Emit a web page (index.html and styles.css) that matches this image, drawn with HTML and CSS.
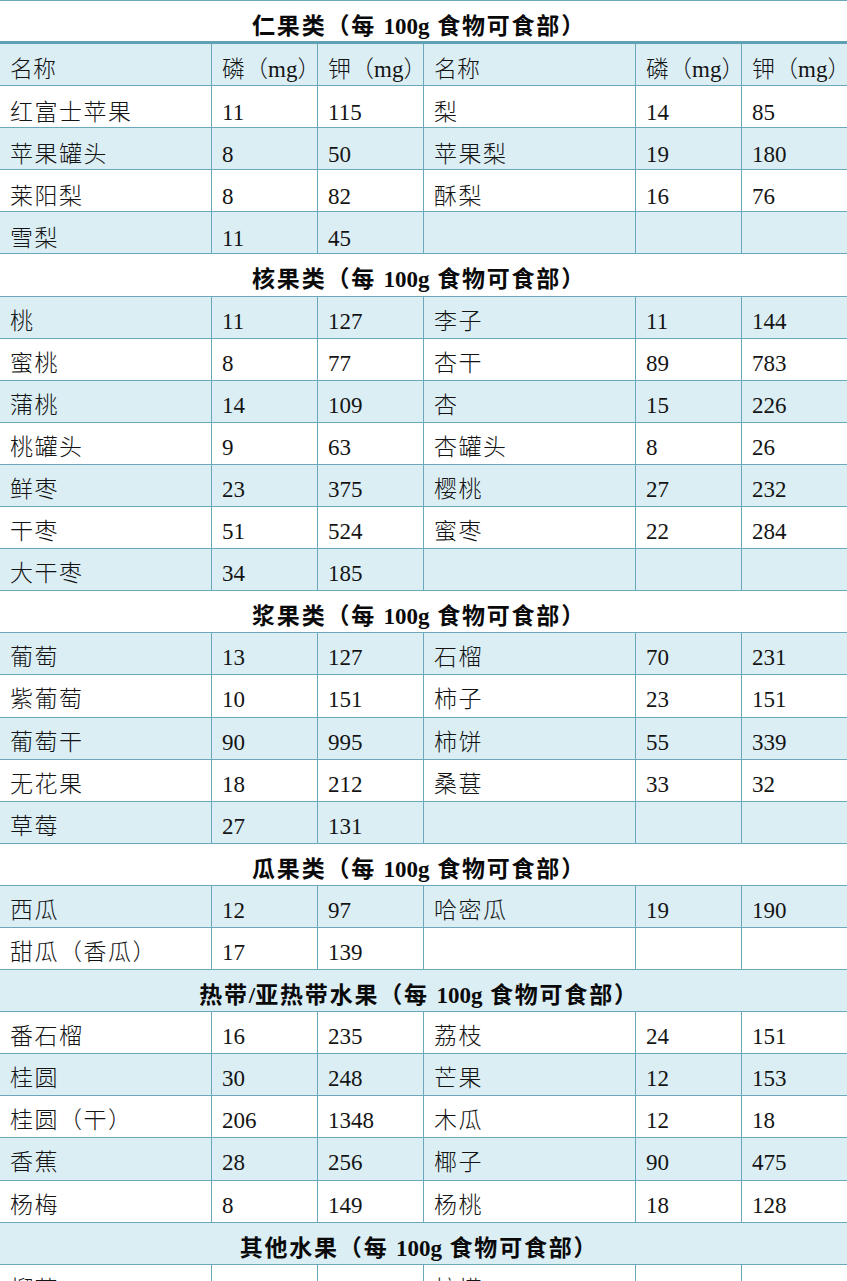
FILE: index.html
```html
<!DOCTYPE html>
<html lang="zh-CN">
<head>
<meta charset="utf-8">
<title>水果磷钾含量表</title>
<link rel="stylesheet" href="styles.css">
</head>
<body>
<div class="table">
  <div class="row title first"><div class="cell">仁果类（每 <span class="num">100g</span> 食物可食部）</div></div>
  <div class="row head alt"><div class="cell">名称</div><div class="cell">磷（mg<span class="hw">）</span></div><div class="cell">钾（mg<span class="hw">）</span></div><div class="cell">名称</div><div class="cell">磷（mg<span class="hw">）</span></div><div class="cell">钾（mg<span class="hw">）</span></div></div>
  <div class="row top"><div class="cell">红富士苹果</div><div class="cell">11</div><div class="cell">115</div><div class="cell">梨</div><div class="cell">14</div><div class="cell">85</div></div>
  <div class="row top alt"><div class="cell">苹果罐头</div><div class="cell">8</div><div class="cell">50</div><div class="cell">苹果梨</div><div class="cell">19</div><div class="cell">180</div></div>
  <div class="row top"><div class="cell">莱阳梨</div><div class="cell">8</div><div class="cell">82</div><div class="cell">酥梨</div><div class="cell">16</div><div class="cell">76</div></div>
  <div class="row top alt"><div class="cell">雪梨</div><div class="cell">11</div><div class="cell">45</div><div class="cell"></div><div class="cell"></div><div class="cell"></div></div>

  <div class="row title"><div class="cell">核果类（每 <span class="num">100g</span> 食物可食部）</div></div>
  <div class="row alt"><div class="cell">桃</div><div class="cell">11</div><div class="cell">127</div><div class="cell">李子</div><div class="cell">11</div><div class="cell">144</div></div>
  <div class="row"><div class="cell">蜜桃</div><div class="cell">8</div><div class="cell">77</div><div class="cell">杏干</div><div class="cell">89</div><div class="cell">783</div></div>
  <div class="row alt"><div class="cell">蒲桃</div><div class="cell">14</div><div class="cell">109</div><div class="cell">杏</div><div class="cell">15</div><div class="cell">226</div></div>
  <div class="row"><div class="cell">桃罐头</div><div class="cell">9</div><div class="cell">63</div><div class="cell">杏罐头</div><div class="cell">8</div><div class="cell">26</div></div>
  <div class="row alt"><div class="cell">鲜枣</div><div class="cell">23</div><div class="cell">375</div><div class="cell">樱桃</div><div class="cell">27</div><div class="cell">232</div></div>
  <div class="row"><div class="cell">干枣</div><div class="cell">51</div><div class="cell">524</div><div class="cell">蜜枣</div><div class="cell">22</div><div class="cell">284</div></div>
  <div class="row alt"><div class="cell">大干枣</div><div class="cell">34</div><div class="cell">185</div><div class="cell"></div><div class="cell"></div><div class="cell"></div></div>

  <div class="row title"><div class="cell">浆果类（每 <span class="num">100g</span> 食物可食部）</div></div>
  <div class="row alt"><div class="cell">葡萄</div><div class="cell">13</div><div class="cell">127</div><div class="cell">石榴</div><div class="cell">70</div><div class="cell">231</div></div>
  <div class="row"><div class="cell">紫葡萄</div><div class="cell">10</div><div class="cell">151</div><div class="cell">柿子</div><div class="cell">23</div><div class="cell">151</div></div>
  <div class="row alt"><div class="cell">葡萄干</div><div class="cell">90</div><div class="cell">995</div><div class="cell">柿饼</div><div class="cell">55</div><div class="cell">339</div></div>
  <div class="row"><div class="cell">无花果</div><div class="cell">18</div><div class="cell">212</div><div class="cell">桑葚</div><div class="cell">33</div><div class="cell">32</div></div>
  <div class="row alt"><div class="cell">草莓</div><div class="cell">27</div><div class="cell">131</div><div class="cell"></div><div class="cell"></div><div class="cell"></div></div>

  <div class="row title"><div class="cell">瓜果类（每 <span class="num">100g</span> 食物可食部）</div></div>
  <div class="row alt"><div class="cell">西瓜</div><div class="cell">12</div><div class="cell">97</div><div class="cell">哈密瓜</div><div class="cell">19</div><div class="cell">190</div></div>
  <div class="row"><div class="cell">甜瓜（香瓜）</div><div class="cell">17</div><div class="cell">139</div><div class="cell"></div><div class="cell"></div><div class="cell"></div></div>

  <div class="row title alt"><div class="cell">热带<span class="num">/</span>亚热带水果（每 <span class="num">100g</span> 食物可食部）</div></div>
  <div class="row"><div class="cell">番石榴</div><div class="cell">16</div><div class="cell">235</div><div class="cell">荔枝</div><div class="cell">24</div><div class="cell">151</div></div>
  <div class="row alt"><div class="cell">桂圆</div><div class="cell">30</div><div class="cell">248</div><div class="cell">芒果</div><div class="cell">12</div><div class="cell">153</div></div>
  <div class="row"><div class="cell">桂圆（干）</div><div class="cell">206</div><div class="cell">1348</div><div class="cell">木瓜</div><div class="cell">12</div><div class="cell">18</div></div>
  <div class="row alt"><div class="cell">香蕉</div><div class="cell">28</div><div class="cell">256</div><div class="cell">椰子</div><div class="cell">90</div><div class="cell">475</div></div>
  <div class="row"><div class="cell">杨梅</div><div class="cell">8</div><div class="cell">149</div><div class="cell">杨桃</div><div class="cell">18</div><div class="cell">128</div></div>

  <div class="row title alt"><div class="cell">其他水果（每 <span class="num">100g</span> 食物可食部）</div></div>
  <div class="row"><div class="cell">榴莲</div><div class="cell">38</div><div class="cell">261</div><div class="cell">柠檬</div><div class="cell">22</div><div class="cell">209</div></div>
</div>
</body>
</html>
```

FILE: styles.css
```css
html, body {
  margin: 0;
  padding: 0;
  background: #ffffff;
}

body {
  font-family: "Liberation Serif", "Noto Sans CJK SC", serif;
  font-size: 23px;
  font-weight: 300;
  color: #141414;
}

.table {
  width: 847px;
  border-top: 1px solid #6ba8bb;
}

.row {
  display: grid;
  grid-template-columns: 212px 106px 106px 212px 106px 105px;
  height: 42.1px;
  box-sizing: border-box;
  border-bottom: 1px solid #6ba8bb;
  background: #ffffff;
}

.row.alt {
  background: #dbeef4;
}

.cell {
  box-sizing: border-box;
  padding: 13px 0 0 10px;
  line-height: 24px;
  white-space: nowrap;
  border-right: 1px solid #6ba8bb;
}

.cell:last-child {
  border-right: none;
}

.row:not(.head):not(.title) .cell:nth-child(1),
.row:not(.head):not(.title) .cell:nth-child(4) {
  letter-spacing: 1.5px;
}

.row.top .cell {
  padding-top: 15px;
}

.row.head .cell {
  padding-top: 14px;
}

.hw {
  font-feature-settings: "halt" 1;
}

.row.title {
  grid-template-columns: 1fr;
}

.row.title .cell {
  border-right: none;
  text-align: center;
  font-weight: bold;
  letter-spacing: 1.8px;
  padding: 14px 9px 0 0;
  color: #0a0a0a;
}

.row.title .num {
  letter-spacing: 0;
}

.row.title.first {
  height: 43px;
  border-bottom: 3px solid #5fa0b5;
}

.row.title.first .cell {
  padding-top: 14px;
}
```
